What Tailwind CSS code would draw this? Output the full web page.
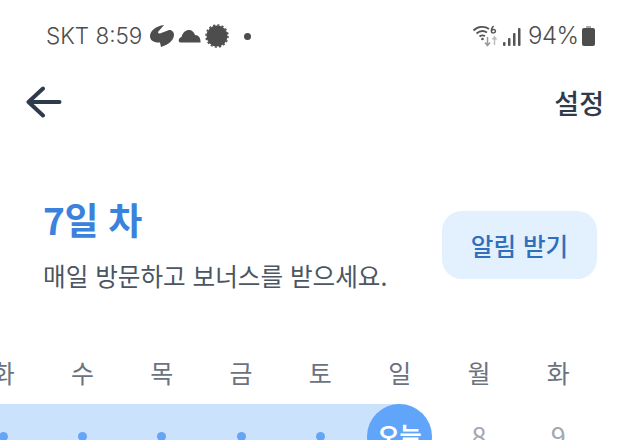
<!DOCTYPE html>
<html lang="ko">
<head>
<meta charset="utf-8">
<script src="https://cdn.jsdelivr.net/npm/@tailwindcss/browser@4"></script>
</head>
<body class="bg-white overflow-hidden">
<div class="w-[640px] h-[440px] overflow-hidden bg-white font-['Inter','Noto_Sans_CJK_KR',sans-serif]">
  <!-- status bar -->
  <div class="h-[72px] pl-[46px] pr-[45px] flex items-center justify-between text-[#4d4d4d]">
    <div class="flex items-center">
      <span class="text-[22.5px] leading-none font-light w-[103px] whitespace-nowrap">SKT 8:59</span>
      <svg class="w-[26px] h-[24px]" viewBox="0 0 26 24" fill="#4d4d4d"><path d="M15 1 L9 8 C9 9 10 9.500 11 9.500 L20 6 C23 6 25 8 25 11 C25 16 19 21 12 23 L11 18.500 C5 19 1 16.500 1 12 C1 7 7 2 15 1 Z"/></svg>
      <svg class="w-[23px] h-[14px] ml-[3px]" viewBox="0 0 23 14" fill="#4d4d4d"><path d="M2.500 13.500 C0 13.500 0 9 3.500 8 C4.500 3.500 8 1 11 1 C14 1 16 3 17 6 C20.500 6 23 9 22.500 13.500 Z"/></svg>
      <svg class="w-[24px] h-[24px] ml-[4px]" viewBox="0 0 24 24" fill="#4d4d4d"><circle cx="12" cy="12" r="10.500"/><circle cx="12" cy="12" r="11" fill="none" stroke="#4d4d4d" stroke-width="1.500" stroke-dasharray="2.200 2.120"/></svg>
      <span class="w-[7px] h-[7px] rounded-full bg-[#4d4d4d] ml-[15px]"></span>
    </div>
    <div class="flex items-center">
      <svg class="w-[26px] h-[24px]" viewBox="0 0 26 24" fill="none" stroke="#555"><path d="M1.500 6.500 C6 2 13 2 17 5" stroke-width="1.800"/><path d="M4.500 9.500 C8 6.500 12 6.500 15 8.500" stroke-width="1.800"/><path d="M7.500 12.500 C9.500 11 11 11 13 12" stroke-width="1.800"/><circle cx="10.500" cy="15" r="1.300" fill="#555" stroke="none"/><path d="M21.500 2 C19.500 4 19 6 19.500 8 C20.500 9.500 23.500 9 23.500 7 C23.500 5 20.500 5 19.500 6.500" stroke-width="1.400"/><path d="M15.500 13 V21 M13 18.500 L15.500 21.500 L18 18.500" stroke="#9a9a9a" stroke-width="1.500"/><path d="M22.500 21 V13 M20.500 15.500 L22.500 13 L24.500 15.500" stroke="#bdbdbd" stroke-width="1.500"/></svg>
      <svg class="w-[18px] h-[19px] ml-[5px]" viewBox="0 0 18 19" fill="#555"><rect x="0" y="15" width="2.500" height="4" rx="1"/><rect x="5" y="11" width="2.500" height="8" rx="1"/><rect x="10" y="6" width="2.500" height="13" rx="1"/><rect x="15" y="1" width="2.500" height="18" rx="1"/></svg>
      <span class="text-[24px] leading-none font-light ml-[7px] w-[51px] whitespace-nowrap tracking-[-0.5px]">94%</span>
      <svg class="w-[13px] h-[20px] ml-[3px]" viewBox="0 0 13 20"><rect x="4" y="0" width="5" height="3" fill="#aaa"/><rect x="0" y="2" width="13" height="18" rx="2" fill="#4d4d4d"/></svg>
    </div>
  </div>
  <!-- app bar -->
  <div class="h-[60px] pl-[26px] pr-[36px] flex items-center justify-between">
    <svg class="w-[36px] h-[32px]" viewBox="0 0 36 32" fill="none" stroke="#2f3b4c" stroke-width="4" stroke-linecap="round" stroke-linejoin="round"><path d="M17 2.500 L2.500 16 L17 29.500 M2.500 16 H33.500"/></svg>
    <span class="text-[27px] leading-none font-medium text-[#2f3b4c] font-['Noto_Sans_CJK_KR',sans-serif]">설정</span>
  </div>
  <!-- heading -->
  <div class="mt-[66px] pl-[43px] pr-[43px] flex items-center justify-between font-['Noto_Sans_CJK_KR',sans-serif]">
    <div>
      <div class="text-[37px] leading-[44px] -mt-[1px] font-bold text-[#3b82dd] tracking-[-0.3px]">7일 차</div>
      <div class="mt-[17px] text-[24.6px] leading-[34px] text-[#4b5563]">매일 방문하고 보너스를 받으세요.</div>
    </div>
    <button class="w-[155px] h-[68px] rounded-[20px] bg-[#e3f0fd] text-[#2f6fbb] text-[24.6px] leading-none font-medium">알림 받기</button>
  </div>
  <!-- calendar -->
  <div class="mt-[62px] -ml-[36.5px] w-[740px] font-['Noto_Sans_CJK_KR',sans-serif]">
    <div class="grid grid-cols-[repeat(8,79.3px)] text-center text-[25px] leading-[36px] text-[#6b7280]">
      <span>화</span><span>수</span><span>목</span><span>금</span><span>토</span><span>일</span><span>월</span><span>화</span>
    </div>
    <div class="mt-[14px] grid grid-cols-[repeat(8,79.3px)] h-[65px] text-center">
      <div class="bg-[#cbe2fd] flex items-center justify-center"><span class="w-[9px] h-[9px] rounded-full bg-[#65a5f5]"></span></div>
      <div class="bg-[#cbe2fd] flex items-center justify-center"><span class="w-[9px] h-[9px] rounded-full bg-[#65a5f5]"></span></div>
      <div class="bg-[#cbe2fd] flex items-center justify-center"><span class="w-[9px] h-[9px] rounded-full bg-[#65a5f5]"></span></div>
      <div class="bg-[#cbe2fd] flex items-center justify-center"><span class="w-[9px] h-[9px] rounded-full bg-[#65a5f5]"></span></div>
      <div class="bg-[#cbe2fd] flex items-center justify-center"><span class="w-[9px] h-[9px] rounded-full bg-[#65a5f5]"></span></div>
      <div class="bg-[linear-gradient(to_right,#cbe2fd_50%,transparent_50%)] flex items-center justify-center"><span class="w-[65px] h-[65px] rounded-full bg-[#60a5fa] text-white text-[24px] leading-[61px] font-bold">오늘</span></div>
      <div class="flex items-center justify-center pb-[3px] text-[27px] leading-none text-[#a3a8b0]">8</div>
      <div class="flex items-center justify-center pb-[3px] text-[27px] leading-none text-[#a3a8b0]">9</div>
    </div>
  </div>
</div>
</body>
</html>
